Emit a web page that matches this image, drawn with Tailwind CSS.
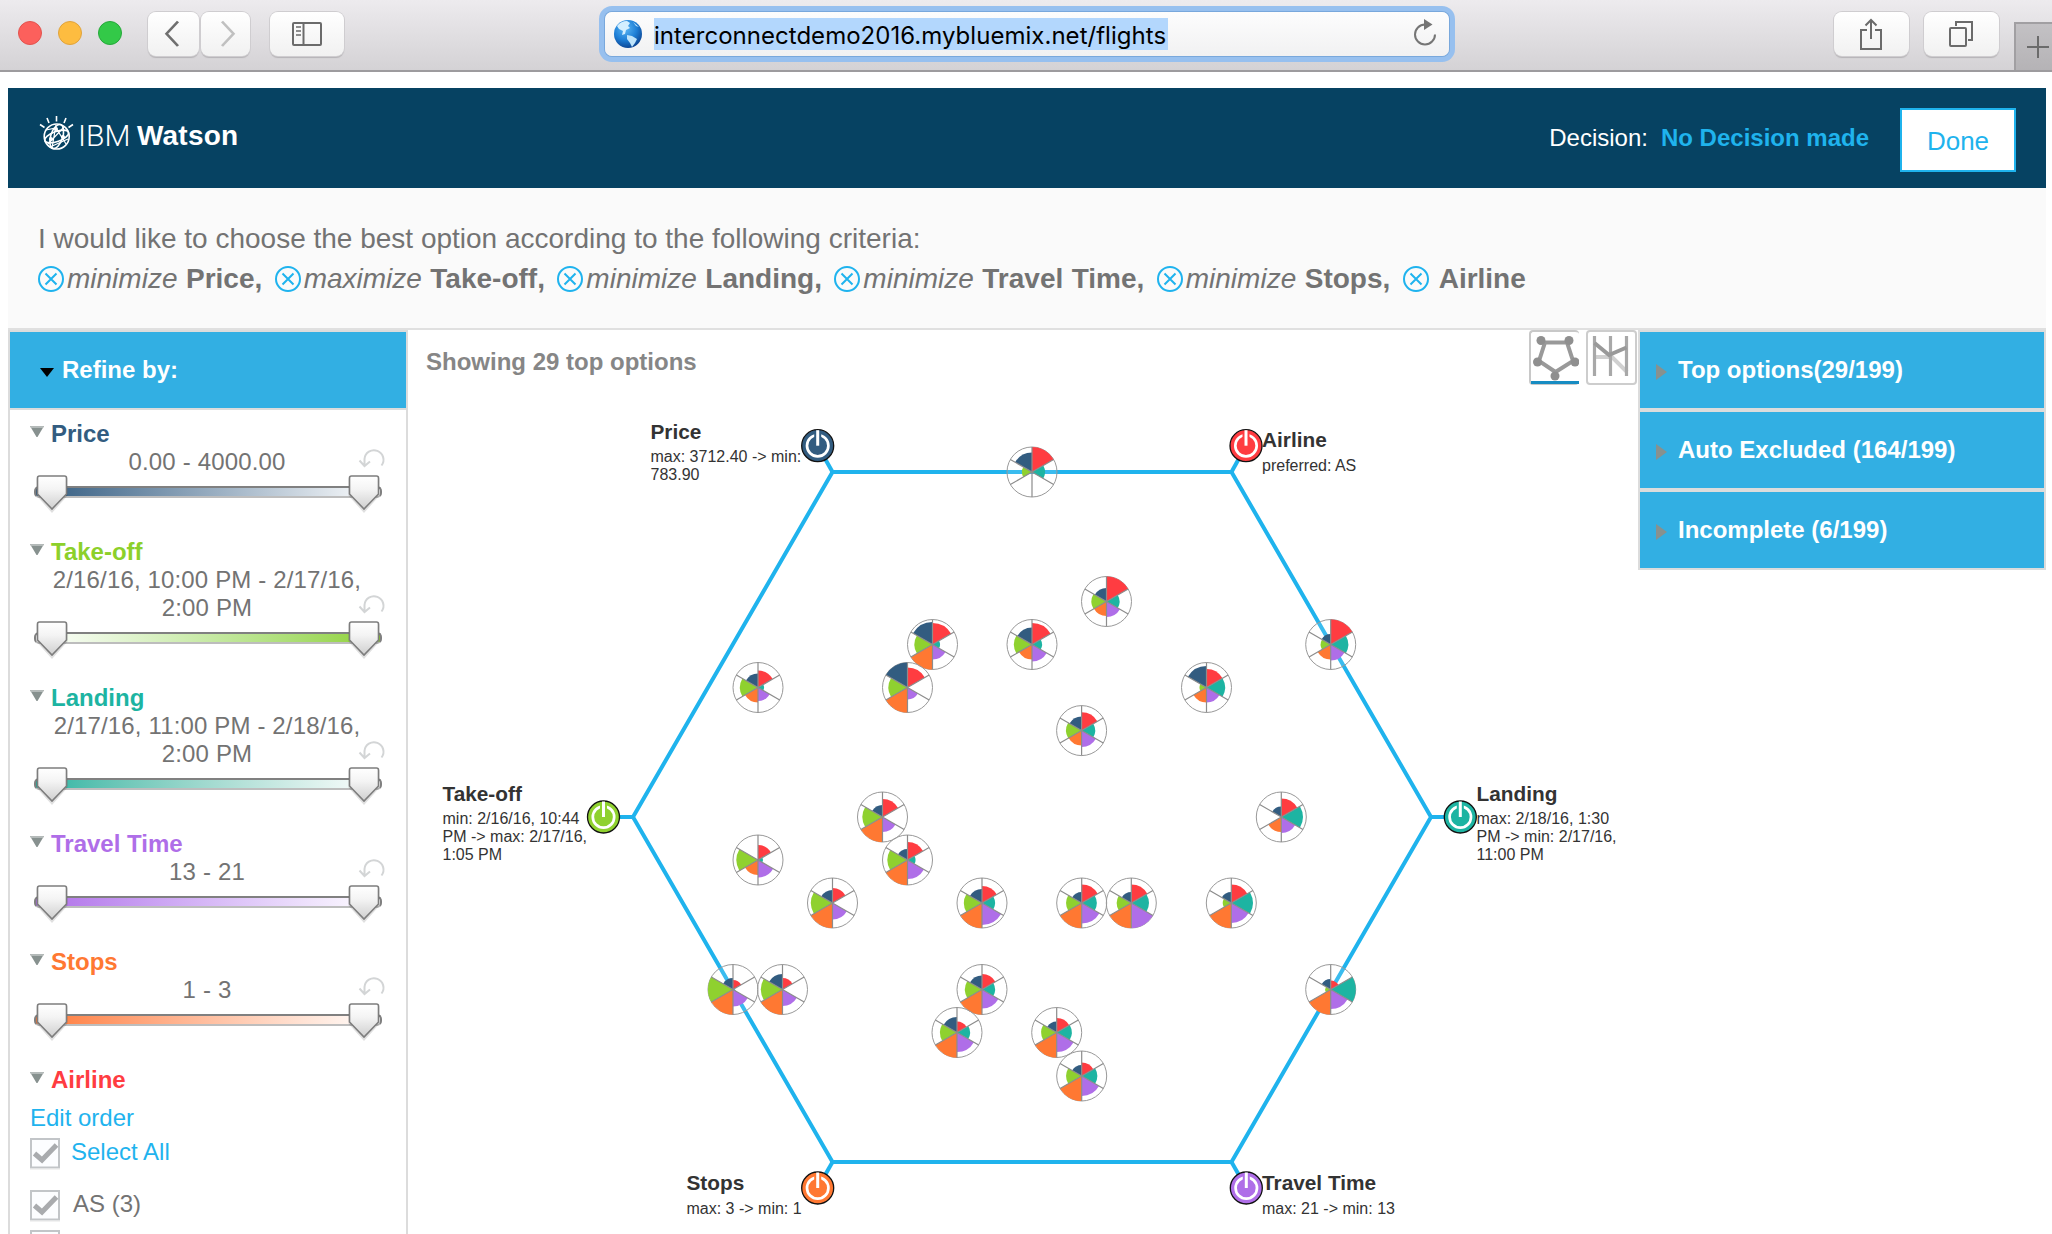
<!DOCTYPE html>
<html lang="en">
<head>
<meta charset="utf-8">
<title>Flights</title>
<script src="https://cdn.jsdelivr.net/npm/@tailwindcss/browser@4"></script>
</head>
<body class="w-[2052px] h-[1234px] overflow-hidden bg-white font-['Liberation_Sans',Arial,sans-serif] text-[24px] text-[#737373]">
<svg class="absolute size-0">
  <defs>
    <linearGradient id="thumbFill" x1="0" y1="0" x2="0" y2="1"><stop offset="0" stop-color="#fff"/><stop offset=".4" stop-color="#f4f4f4"/><stop offset="1" stop-color="#cfcfcf"/></linearGradient>
    <radialGradient id="globeFill" cx=".4" cy=".3" r=".75"><stop offset="0" stop-color="#5db8f5"/><stop offset=".55" stop-color="#1e7fd6"/><stop offset="1" stop-color="#0b3f8c"/></radialGradient>
    <symbol id="thumb" viewBox="0 0 36 38">
      <path d="M4 3.5Q4 1.5 6 1.5H30Q32 1.5 32 3.5V19L18 34.5L4 19Z" transform="translate(0,1.2)" fill="none" stroke="#000" stroke-opacity=".12" stroke-width="3"/>
      <path d="M3.5 3Q3.5 1 5.5 1H30.5Q32.5 1 32.5 3V19L18 34L3.500 19Z" fill="url(#thumbFill)" stroke="#7d7d7d" stroke-width="1.6"/>
    </symbol>
    <symbol id="undo" viewBox="0 0 28 22"><path d="M6.500 18V12a9.500 9.500 0 1 1 17 6.500M1.500 13.500L6.500 19L12 14.500" fill="none" stroke="#d3d5d6" stroke-width="2"/></symbol>
    <symbol id="down" viewBox="0 0 14 11"><path d="M0 0H14L7.500 11H6.500Z" fill="#87918f"/><path d="M0 0H14L13 2H1Z" fill="#b4bab9"/></symbol>
    <symbol id="remove" viewBox="0 0 26 26"><circle cx="13" cy="13" r="12" fill="none" stroke="#1fb3ee" stroke-width="2"/><path d="M7.500 7.500L18.500 18.500M18.500 7.500L7.500 18.500" stroke="#1fb3ee" stroke-width="2"/></symbol>
    <symbol id="check" viewBox="0 0 30 32"><rect x="1" y="1" width="28" height="28.500" fill="#fcfdff" stroke="#c2c5c8" stroke-width="2"/><path d="M0 31H30" stroke="#e6e6e6"/><path d="M4.500 15.500L12 22L26.500 7" fill="none" stroke="#a9abae" stroke-width="5"/></symbol>
  </defs>
</svg>

<!-- browser toolbar -->
<div class="flex h-[72px] border-b-2 border-[#9d9b9e] bg-linear-to-b from-[#edebee] to-[#d4d2d5] pl-[18px]">
  <div class="flex gap-4 pt-[21px]">
    <span class="size-6 rounded-full border border-[#e2534e] bg-[#fc605c]"></span>
    <span class="size-6 rounded-full border border-[#e0a33c] bg-[#fdbc40]"></span>
    <span class="size-6 rounded-full border border-[#25a83a] bg-[#33c948]"></span>
  </div>
  <div class="ml-[26px] mt-3 flex h-[44px] gap-[2px]">
    <div class="flex w-[51px] items-center justify-center rounded-lg bg-linear-to-b from-white to-[#f1f1f1] pr-1 shadow-[0_0_0_1px_#cfcdd0,0_2px_1px_#b5b3b6]"><svg class="h-[30px] w-4" viewBox="0 0 16 30"><path d="M14 1L2.500 15L14 29" transform="translate(0,1.500) scale(1,.88)" fill="none" stroke="#6f6f6f" stroke-width="2.700"/></svg></div>
    <div class="flex w-[49px] items-center justify-center rounded-lg bg-linear-to-b from-white to-[#f1f1f1] pl-1 shadow-[0_0_0_1px_#cfcdd0,0_2px_1px_#b5b3b6]"><svg class="h-[30px] w-4" viewBox="0 0 16 30"><path d="M2 1L13.500 15L2 29" transform="translate(0,1.500) scale(1,.88)" fill="none" stroke="#c0c0c0" stroke-width="2.700"/></svg></div>
  </div>
  <div class="ml-5 mt-3 flex h-[44px] w-[74px] items-center justify-center rounded-lg bg-linear-to-b from-white to-[#f1f1f1] shadow-[0_0_0_1px_#cfcdd0,0_2px_1px_#b5b3b6]"><svg class="h-6 w-8" viewBox="0 0 32 24"><rect x="2" y="1" width="28" height="22" rx="1" fill="none" stroke="#6b6b6b" stroke-width="2"/><path d="M12.500 1V23" stroke="#6b6b6b" stroke-width="2"/><path d="M5 5H10M5 9H10M5 13H10" stroke="#6b6b6b" stroke-width="1.500"/></svg></div>

  <div class="ml-[261px] mt-3 flex h-[44px] w-[844px] items-center rounded-[7px] bg-linear-to-b from-[#fdfdfd] to-[#f1f1f2] pl-[9px] shadow-[0_0_0_1px_#79a8dc,0_0_0_6px_#97c0ef]">
    <svg class="size-7" viewBox="0 0 28 28"><circle cx="14" cy="14" r="14" fill="url(#globeFill)"/><path d="M3 6Q7 1 13 1L16 3L14 6L16 8L12 10L11 14L8 15L9 11L5 9Z" fill="#d3efff"/><path d="M13 15L18 16L23 19L21 23L18 27L16 23L13 19Z" fill="#bfe4fb"/><path d="M19 2L25 7L22 6Z" fill="#bfe4fb"/></svg>
    <span class="ml-3 flex h-8 w-[514px] items-center whitespace-nowrap bg-[#b3d7fd] pt-[4px] font-['Inter',sans-serif] text-[24px] tracking-[0.03px] text-black">interconnectdemo2016.mybluemix.net/flights</span>
    <svg class="ml-[245px] mt-[-2px] h-7 w-6" viewBox="0 0 24 28"><path d="M12 5.500A10 10 0 1 0 22 15.500" fill="none" stroke="#757575" stroke-width="2"/><path d="M11 0L19.500 5.500L11 11Z" fill="#757575"/></svg>
  </div>

  <div class="ml-[385px] mt-3 flex h-[44px] w-[75px] items-center justify-center rounded-lg bg-linear-to-b from-white to-[#f1f1f1] pr-[2px] shadow-[0_0_0_1px_#cfcdd0,0_2px_1px_#b5b3b6]"><svg class="h-8 w-6" viewBox="0 0 24 32"><path d="M8 12H2V31H22V12H16M12 21V2M6.500 7.500L12 2L17.500 7.500" fill="none" stroke="#6b6b6b" stroke-width="2"/></svg></div>
  <div class="ml-[15px] mt-3 flex h-[44px] w-[75px] items-center justify-center rounded-lg bg-linear-to-b from-white to-[#f1f1f1] pr-[2px] shadow-[0_0_0_1px_#cfcdd0,0_2px_1px_#b5b3b6]"><svg class="h-7 w-6" viewBox="0 0 24 28"><rect x="1" y="8" width="16" height="18" rx="1" fill="none" stroke="#6b6b6b" stroke-width="2"/><path d="M7 6V2H23V20H19" fill="none" stroke="#6b6b6b" stroke-width="2"/></svg></div>
  <div class="ml-[15px] mt-[22px] flex h-12 w-[38px] items-center justify-center border-l-2 border-t-2 border-[#a19fa2] bg-linear-to-b from-[#c3c1c4] to-[#b5b3b6]"><svg class="ml-[7px] size-6" viewBox="0 0 24 24"><path d="M12 1V23M1 12H23" stroke="#6b6b6b" stroke-width="2"/></svg></div>
</div>

<div class="ml-2 mt-4 w-[2038px]">
  <header class="flex h-[100px] items-start bg-[#064262] pl-[30px] pr-[30px]">
    <svg class="mt-[27px] h-9 w-9" viewBox="0 0 36 36" fill="none" stroke="#fff"><g stroke-width="1.600"><circle cx="18.700" cy="21.500" r="12.500"/><ellipse cx="18.700" cy="21.500" rx="6" ry="12.500" transform="rotate(18 18.700 21.500)"/><ellipse cx="18.700" cy="21.500" rx="12.500" ry="5" transform="rotate(-20 18.700 21.500)"/><path d="M8 15L18 13L28 29M10 29L26 12M12 32L30 24M18 10L14 33" stroke-width="1.200"/></g><path d="M18.500 1V6.500M9 3L11 8M28 3L26 8M2 9.500L6.500 12.500M35 9.500L30.500 12.500" stroke-width="1.600"/><g fill="#fff" stroke="none"><circle cx="18" cy="14" r="2"/><circle cx="13" cy="24" r="2"/><circle cx="25" cy="22" r="2"/></g></svg>
    <div class="ml-[4px] mt-[32px] flex text-[28px] leading-8 text-white"><span class="w-[59px] font-['Roboto','Inter',sans-serif] text-[30px] font-light">IBM</span><b class="tracking-[0.2px]">Watson</b></div>
    <div class="ml-auto mt-[36px] flex leading-7"><span class="text-white">Decision:</span><b class="ml-[13px] text-[#1fb3ed]">No Decision made</b></div>
    <div class="ml-[31px] mt-5 flex h-16 w-[116px] items-center justify-center border-2 border-[#1fb3ed] bg-white pt-[2px] text-[26px] text-[#1fb3ed]">Done</div>
  </header>

  <section class="h-[142px] border-b-2 border-[#e0e0e0] bg-[#fafafa] pl-[30px] pt-[31px] text-[28px] leading-10">
    <p>I would like to choose the best option according to the following criteria:</p>
    <div class="flex items-center gap-[12.4px] whitespace-nowrap [word-spacing:0.7px]">
      <span class="flex items-center gap-[3px]"><svg class="size-[26px]"><use href="#remove"/></svg><span><i>minimize</i> <b>Price,</b></span></span>
      <span class="flex items-center gap-[3px]"><svg class="size-[26px]"><use href="#remove"/></svg><span><i>maximize</i> <b>Take-off,</b></span></span>
      <span class="flex items-center gap-[3px]"><svg class="size-[26px]"><use href="#remove"/></svg><span><i>minimize</i> <b>Landing,</b></span></span>
      <span class="flex items-center gap-[3px]"><svg class="size-[26px]"><use href="#remove"/></svg><span><i>minimize</i> <b>Travel Time,</b></span></span>
      <span class="flex items-center gap-[3px]"><svg class="size-[26px]"><use href="#remove"/></svg><span><i>minimize</i> <b>Stops,</b></span></span>
      <span class="flex items-center gap-[10px]"><svg class="size-[26px]"><use href="#remove"/></svg><b>Airline</b></span>
    </div>
  </section>

  <div class="flex h-[904px] items-start">
    <aside class="h-[904px] w-[400px] overflow-hidden border-x-2 border-t-2 border-[#dcdcdc]">
      <div class="flex h-[78px] items-center border-b-2 border-[#dcdcdc] bg-[#32afe3] pl-[30px] font-bold text-white">
        <svg class="mr-[8px] mt-1 h-[10px] w-[14px]" viewBox="0 0 14 10"><path d="M0 1H14L7 10Z"/></svg>Refine by:
      </div>
      <div class="pl-5 pr-[18px] pt-[10px] leading-7">
        <div class="h-[118px]">
          <div class="flex items-start font-bold text-[#325c80]"><svg class="mr-[7px] mt-[6px] h-[11px] w-[14px]"><use href="#down"/></svg>Price</div>
          <div class="relative pl-[14px] pr-[18px] text-center tracking-[0.15px]">0.00 - 4000.00<svg class="absolute bottom-[7px] right-[2px] h-[22px] w-7"><use href="#undo"/></svg></div>
          <div class="relative -mt-px flex h-[38px] justify-between px-[4px]">
            <span class="absolute left-1 right-[6px] top-[11px] h-3 rounded-[5px] border-2 border-[#808080] border-b-[#bdbdbd] bg-linear-to-r from-[#325c80] to-white"></span>
            <svg class="relative h-[38px] w-9"><use href="#thumb"/></svg><svg class="relative right-[2px] h-[38px] w-9"><use href="#thumb"/></svg>
          </div>
        </div>
        <div class="h-[146px]">
          <div class="flex items-start font-bold text-[#8cd02a]"><svg class="mr-[7px] mt-[6px] h-[11px] w-[14px]"><use href="#down"/></svg>Take-off</div>
          <div class="relative pl-[14px] pr-[18px] text-center tracking-[0.15px]">2/16/16, 10:00 PM - 2/17/16,<br>2:00 PM<svg class="absolute bottom-[7px] right-[2px] h-[22px] w-7"><use href="#undo"/></svg></div>
          <div class="relative -mt-px flex h-[38px] justify-between px-[4px]">
            <span class="absolute left-1 right-[6px] top-[11px] h-3 rounded-[5px] border-2 border-[#808080] border-b-[#bdbdbd] bg-linear-to-l from-[#8fd12f] to-white"></span>
            <svg class="relative h-[38px] w-9"><use href="#thumb"/></svg><svg class="relative right-[2px] h-[38px] w-9"><use href="#thumb"/></svg>
          </div>
        </div>
        <div class="h-[146px]">
          <div class="flex items-start font-bold text-[#1db4a2]"><svg class="mr-[7px] mt-[6px] h-[11px] w-[14px]"><use href="#down"/></svg>Landing</div>
          <div class="relative pl-[14px] pr-[18px] text-center tracking-[0.15px]">2/17/16, 11:00 PM - 2/18/16,<br>2:00 PM<svg class="absolute bottom-[7px] right-[2px] h-[22px] w-7"><use href="#undo"/></svg></div>
          <div class="relative -mt-px flex h-[38px] justify-between px-[4px]">
            <span class="absolute left-1 right-[6px] top-[11px] h-3 rounded-[5px] border-2 border-[#808080] border-b-[#bdbdbd] bg-linear-to-r from-[#1db4a2] to-white"></span>
            <svg class="relative h-[38px] w-9"><use href="#thumb"/></svg><svg class="relative right-[2px] h-[38px] w-9"><use href="#thumb"/></svg>
          </div>
        </div>
        <div class="h-[118px]">
          <div class="flex items-start font-bold text-[#af6ee8]"><svg class="mr-[7px] mt-[6px] h-[11px] w-[14px]"><use href="#down"/></svg>Travel Time</div>
          <div class="relative pl-[14px] pr-[18px] text-center tracking-[0.15px]">13 - 21<svg class="absolute bottom-[7px] right-[2px] h-[22px] w-7"><use href="#undo"/></svg></div>
          <div class="relative -mt-px flex h-[38px] justify-between px-[4px]">
            <span class="absolute left-1 right-[6px] top-[11px] h-3 rounded-[5px] border-2 border-[#808080] border-b-[#bdbdbd] bg-linear-to-r from-[#af6ee8] to-white"></span>
            <svg class="relative h-[38px] w-9"><use href="#thumb"/></svg><svg class="relative right-[2px] h-[38px] w-9"><use href="#thumb"/></svg>
          </div>
        </div>
        <div class="h-[118px]">
          <div class="flex items-start font-bold text-[#ff7832]"><svg class="mr-[7px] mt-[6px] h-[11px] w-[14px]"><use href="#down"/></svg>Stops</div>
          <div class="relative pl-[14px] pr-[18px] text-center tracking-[0.15px]">1 - 3<svg class="absolute bottom-[7px] right-[2px] h-[22px] w-7"><use href="#undo"/></svg></div>
          <div class="relative -mt-px flex h-[38px] justify-between px-[4px]">
            <span class="absolute left-1 right-[6px] top-[11px] h-3 rounded-[5px] border-2 border-[#808080] border-b-[#bdbdbd] bg-linear-to-r from-[#ff7832] to-white"></span>
            <svg class="relative h-[38px] w-9"><use href="#thumb"/></svg><svg class="relative right-[2px] h-[38px] w-9"><use href="#thumb"/></svg>
          </div>
        </div>
        <div class="flex items-start font-bold text-[#ff3c41]"><svg class="mr-[7px] mt-[6px] h-[11px] w-[14px]"><use href="#down"/></svg>Airline</div>
        <div class="mt-[10px] text-[#1fb3ee]">Edit order</div>
        <div class="mt-[6px] flex h-[52px] items-start gap-[11px] text-[#1fb3ee]"><svg class="h-8 w-[30px]"><use href="#check"/></svg>Select All</div>
        <div class="flex h-[40px] items-start gap-[13px]"><svg class="h-8 w-[30px]"><use href="#check"/></svg>AS (3)</div>
        <div class="flex h-[40px] items-start"><svg class="h-8 w-[30px]"><use href="#check"/></svg></div>
      </div>
    </aside>

    <main class="w-[1230px]">
      <div class="flex h-[70px] items-start pl-[18px]">
        <b class="mt-[18px] leading-7 text-[#868686]">Showing 29 top options</b>
        <div class="ml-auto flex gap-[7px] pr-px">
          <div class="h-[55px] w-[50px] rounded-[4px] border-2 border-r-0 border-[#c8c8c8]"><svg class="h-[52px] w-[48px]" viewBox="0 0 48 52"><path d="M14 10.500H36L42 29L24.500 40L8 29Z" fill="none" stroke="#999" stroke-width="4"/><g fill="#8f8f8f"><circle cx="10" cy="8.500" r="4.500"/><circle cx="38" cy="8.500" r="4.500"/><circle cx="6.500" cy="30" r="4.500"/><circle cx="44" cy="30" r="4.500"/><circle cx="24" cy="44" r="4.500"/></g><path d="M0 51H48" stroke="#178cc2" stroke-width="4"/></svg></div>
          <div class="h-[55px] w-[51px] rounded-[4px] border-2 border-[#cdcdcd]"><svg class="h-[50px] w-[47px]" viewBox="0 0 47 50" fill="none"><path d="M6.500 25H24L39 40" stroke="#d0d0d0" stroke-width="4"/><path d="M6.500 4V44M22.500 4V44M38.500 4V44" stroke="#a8a8a8" stroke-width="3.200"/><path d="M6.500 11L21 23L38.500 15.500" stroke="#999" stroke-width="4"/></svg></div>
        </div>
      </div>
      <svg id="chart" class="block h-[834px] w-[1230px]" viewBox="408 400 1230 834"></svg>
    </main>

    <aside class="flex w-[408px] flex-col gap-1 border-2 border-[#dcdcdc] bg-[#dcdcdc] font-bold text-white">
      <div class="flex h-[76px] items-center gap-[11px] bg-[#32afe3] pl-4"><svg class="mt-1 h-4 w-[11px]" viewBox="0 0 11 16"><path d="M0 0L11 8L0 16Z" fill="#87918f"/></svg>Top options(29/199)</div>
      <div class="flex h-[76px] items-center gap-[11px] bg-[#32afe3] pl-4"><svg class="mt-1 h-4 w-[11px]" viewBox="0 0 11 16"><path d="M0 0L11 8L0 16Z" fill="#87918f"/></svg>Auto Excluded (164/199)</div>
      <div class="flex h-[76px] items-center gap-[11px] bg-[#32afe3] pl-4"><svg class="mt-1 h-4 w-[11px]" viewBox="0 0 11 16"><path d="M0 0L11 8L0 16Z" fill="#87918f"/></svg>Incomplete (6/199)</div>
    </aside>
  </div>
</div>

<script>
// Wedge order, clockwise from twelve: airline, landing, travel time, stops, take-off, price
const COLORS = ['#ff3c41', '#1db4a2', '#af6ee8', '#ff7832', '#8fd12f', '#325c80'];
const options = [
  [1032,472,25,13,0,0,10,19.5],[1106.5,601.5,25,13,15.5,14.5,15,13.5],[1032,644.5,21.5,10,17,15,18,17],
  [932.5,644.5,21.5,7.5,15,25,18,22.5],[907.5,687.5,20,0,12,25,19,25],[758,687.5,17,6,13.5,15,18,14],
  [1330.7,644.5,25,17.5,16,15,10,10.5],[1206.5,687.5,18.5,18.5,15,15,7,21.5],[1081.6,730.6,18.3,13.5,16.5,15,15.5,14],
  [1281.3,817,18.5,21.5,16,15,0,10.5],[982,903,17,13,22,25,18,14],[1081.7,903,18.5,15,20.5,25,15.5,11],
  [1131.3,903,18.5,17.5,25,25,14.5,11],[1231.3,903,18.5,21.5,20,25,8.5,11],[982,989.5,15.5,13,19,25,17,14],
  [1330.7,989.5,9,25,19.5,25,5.5,10.5],[957,1032.5,11,13,19.5,25,17,15.5],[1056.7,1032.5,14.5,15,19.5,25,15.5,11],
  [1081.7,1076,13.5,15.5,20,25,15.5,11],[882.5,817,18,0,15,25,20,12],[907.5,860,18,8,19,25,20,11],
  [758,860,15,5,17.5,15,21.5,0],[832.5,903,15,0,16.5,25,21.5,13],[733,989.5,9.5,0,17,25,25,11.5],
  [782.5,989.5,11.5,0,16.5,25,21.5,15.5]
];
const goals = [
  {c:'#325c80', x:817.7, y:445.7, vx:832.5, vy:472, lx:650.5, ly:438.5, t:'Price', s:['max: 3712.40 -> min:','783.90']},
  {c:'#ff3c41', x:1246, y:445.7, vx:1231.5, vy:472, lx:1262, ly:447, t:'Airline', s:['preferred: AS']},
  {c:'#1db4a2', x:1460.3, y:817, vx:1431, vy:817, lx:1476.5, ly:800.5, t:'Landing', s:['max: 2/18/16, 1:30','PM -> min: 2/17/16,','11:00 PM']},
  {c:'#af6ee8', x:1246.3, y:1188, vx:1231.5, vy:1162, lx:1262, ly:1190, t:'Travel Time', s:['max: 21 -> min: 13']},
  {c:'#ff7832', x:817.7, y:1188, vx:832.5, vy:1162, lx:686.5, ly:1190, t:'Stops', s:['max: 3 -> min: 1']},
  {c:'#8fd12f', x:603.5, y:817, vx:633, vy:817, lx:442.5, ly:800.5, t:'Take-off', s:['min: 2/16/16, 10:44','PM -> max: 2/17/16,','1:05 PM']}
];
const at = (r, deg) => (r * Math.sin(deg * Math.PI / 180)).toFixed(2) + ' ' + (-r * Math.cos(deg * Math.PI / 180)).toFixed(2);
let out = `<g stroke="#1fb3ed" stroke-width="4" fill="none"><polygon points="${goals.map(g => g.vx + ',' + g.vy).join(' ')}"/>`;
out += goals.map(g => `<path d="M${g.vx} ${g.vy}L${g.x} ${g.y}"/>`).join('') + '</g>';
for (const [x, y, ...radii] of options) {
  out += `<g transform="translate(${x} ${y})"><circle r="25" fill="#fff" fill-opacity=".12" stroke="#999" stroke-width="1"/>`;
  radii.forEach((r, i) => { if (r) out += `<path d="M0 0L${at(r, i * 60)}A${r} ${r} 0 0 1 ${at(r, i * 60 + 60)}Z" fill="${COLORS[i]}"/>`; });
  out += '<path d="' + [0, 60, 120, 180, 240, 300].map(a => 'M0 0L' + at(25, a)).join('') + '" stroke="#8c8c8c" stroke-width="1.2" fill="none"/></g>';
}
for (const g of goals) {
  out += `<g transform="translate(${g.x} ${g.y})"><circle r="16" fill="${g.c}" stroke="#111" stroke-width="1.3"/><circle r="10.7" fill="none" stroke="#fff" stroke-width="2.7"/><path d="M0 -14.500V-6" stroke="${g.c}" stroke-width="7"/><path d="M0 -15.500V0" stroke="#fff" stroke-width="3"/></g>`;
  out += `<text x="${g.lx}" y="${g.ly}" font-size="20.8" font-weight="700" fill="#333">${g.t}</text>`;
  g.s.forEach((s, i) => { out += `<text x="${g.lx}" y="${g.ly + 23.5 + i * 18}" font-size="16" fill="#333">${s.replace('>', '&gt;')}</text>`; });
}
document.getElementById('chart').innerHTML = out;
</script>
</body>
</html>
